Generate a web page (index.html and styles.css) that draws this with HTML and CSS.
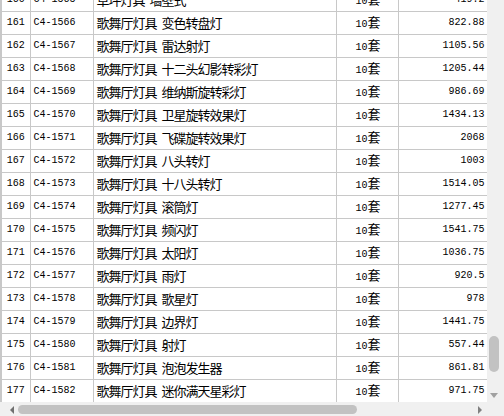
FILE: index.html
```html
<!DOCTYPE html>
<html lang="zh-CN">
<head>
<meta charset="utf-8">
<title>定额表</title>
<link rel="stylesheet" href="styles.css">
</head>
<body>
<div class="window">
  <div class="view" id="view">
    <table class="grid">
      <colgroup>
        <col class="c-no">
        <col class="c-code">
        <col class="c-name">
        <col class="c-unit">
        <col class="c-price">
        <col class="c-extra">
      </colgroup>
      <tbody id="rows"></tbody>
    </table>
  </div>
  <div class="vbar">
    <div class="vthumb"></div>
    <span class="arrow-down"></span>
  </div>
  <div class="hbar">
    <span class="arrow-left"></span>
    <div class="hthumb"></div>
    <span class="arrow-right"></span>
  </div>
  <div class="corner"></div>
</div>
<script src="app.js"></script>
</body>
</html>
```
FILE: styles.css
```css
html, body {
  margin: 0;
  padding: 0;
  background: #fff;
}
.window {
  display: grid;
  grid-template-columns: 487px 17px;
  grid-template-rows: 402px 14px;
  width: 504px;
  height: 416px;
}
.view {
  overflow: hidden;
  background: #fff;
}
.grid {
  border-collapse: collapse;
  table-layout: fixed;
  width: 660px;
  font-family: "Noto Sans CJK SC", sans-serif;
  font-size: 13px;
  letter-spacing: -1px;
  word-spacing: 3px;
  color: #000;
}
.c-no { width: 29px; }
.c-code { width: 63px; }
.c-name { width: 243px; }
.c-unit { width: 62px; }
.c-price { width: 89px; }
.c-extra { width: 174px; }
.grid tr { height: 23px; }
.grid td {
  border: 1px solid #c8c8c8;
  padding: 0 2px 0 3px;
  white-space: nowrap;
  overflow: hidden;
  line-height: 14px;
  vertical-align: middle;
}
.grid td.no {
  border-left: 2px solid #c8c8c8;
  text-align: center;
  padding: 0;
}
.mono {
  font-family: "Liberation Mono", monospace;
  font-size: 10px;
  letter-spacing: 0;
  word-spacing: 0;
}
.grid td.unit { text-align: center; }
.grid td.price { text-align: right; padding-right: 2px; }

/* scrollbars */
.vbar {
  background: #f0f0f0;
  display: flex;
  flex-direction: column;
  justify-content: flex-end;
  align-items: flex-start;
  padding: 0 0 4px 2px;
}
.vthumb {
  width: 10px;
  height: 36px;
  border-radius: 5px;
  background: #c2c2c2;
  margin-bottom: 21px;
}
.arrow-down {
  width: 0;
  height: 0;
  margin-left: 1px;
  border-left: 4px solid transparent;
  border-right: 4px solid transparent;
  border-top: 5px solid #a0a0a0;
}
.hbar {
  background: #f0f0f0;
  display: flex;
  align-items: center;
  padding: 1px 0 0 10px;
}
.arrow-left {
  width: 0;
  height: 0;
  border-top: 4px solid transparent;
  border-bottom: 4px solid transparent;
  border-right: 4px solid #707070;
}
.hthumb {
  width: 339px;
  height: 9px;
  border-radius: 5px;
  background: #c2c2c2;
  margin-left: 4px;
}
.arrow-right {
  width: 0;
  height: 0;
  margin-left: 121px;
  border-top: 4px solid transparent;
  border-bottom: 4px solid transparent;
  border-left: 4px solid #808080;
}
.corner {
  background: #f0f0f0;
}
```
FILE: app.js
```js
(function () {
  var data = {
    160: ["草坪灯具 墙壁式", "419.2"],
    161: ["歌舞厅灯具 变色转盘灯", "822.88"],
    162: ["歌舞厅灯具 雷达射灯", "1105.56"],
    163: ["歌舞厅灯具 十二头幻影转彩灯", "1205.44"],
    164: ["歌舞厅灯具 维纳斯旋转彩灯", "986.69"],
    165: ["歌舞厅灯具 卫星旋转效果灯", "1434.13"],
    166: ["歌舞厅灯具 飞碟旋转效果灯", "2068"],
    167: ["歌舞厅灯具 八头转灯", "1003"],
    168: ["歌舞厅灯具 十八头转灯", "1514.05"],
    169: ["歌舞厅灯具 滚筒灯", "1277.45"],
    170: ["歌舞厅灯具 频闪灯", "1541.75"],
    171: ["歌舞厅灯具 太阳灯", "1036.75"],
    172: ["歌舞厅灯具 雨灯", "920.5"],
    173: ["歌舞厅灯具 歌星灯", "978"],
    174: ["歌舞厅灯具 边界灯", "1441.75"],
    175: ["歌舞厅灯具 射灯", "557.44"],
    176: ["歌舞厅灯具 泡泡发生器", "861.81"],
    177: ["歌舞厅灯具 迷你满天星彩灯", "971.75"],
    178: ["歌舞厅灯具 彩控器", "1120.4"],
    179: ["歌舞厅灯具 紫外线灯", "842.6"],
    180: ["歌舞厅灯具 蛇光管", "655.3"],
    181: ["歌舞厅灯具 满天星彩灯", "930.12"],
    182: ["歌舞厅灯具 灯光控制台", "1380.5"],
    183: ["歌舞厅灯具 烟雾机", "1012.8"],
    184: ["歌舞厅灯具 激光灯", "1655.2"]
  };
  var tbody = document.getElementById("rows");
  var html = "";
  for (var i = 1; i <= 184; i++) {
    var d = data[i] || ["草坪灯具 立柱式", "398.6"];
    html += '<tr>' +
      '<td class="no mono">' + i + '</td>' +
      '<td class="code mono">C4-' + (1405 + i) + '</td>' +
      '<td class="name">' + d[0] + '</td>' +
      '<td class="unit"><span class="mono">10</span>套</td>' +
      '<td class="price mono">' + d[1] + '</td>' +
      '<td class="extra"></td>' +
      '</tr>';
  }
  tbody.innerHTML = html;
  document.getElementById("view").scrollTop = 3669;
})();
```
